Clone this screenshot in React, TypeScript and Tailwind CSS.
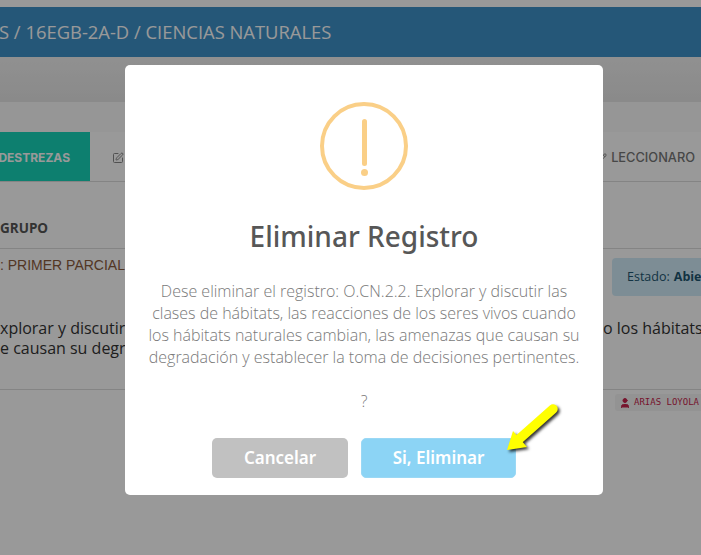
import { Pencil, SquarePen, User } from "lucide-react";

function Tabs() {
  return (
    <div className="flex h-[50px] border-b border-[#ddd] font-['Inter',sans-serif] text-[12px] font-semibold">
      <div className="flex w-[90px] shrink-0 items-center justify-end overflow-hidden whitespace-nowrap bg-[#16d4ba] pr-[20px] pt-[2px] font-bold text-white">
        DESTREZAS
      </div>
      <div className="flex flex-1 items-center pl-[22px] pt-[2px] text-[#888]">
        <SquarePen className="h-3 w-3" />
      </div>
      <div className="flex items-center gap-1 pr-[6px] pt-[2px] text-[12.8px] font-medium text-[#777]">
        <Pencil className="h-2.5 w-2.5" />
        <span>LECCIONARO</span>
      </div>
    </div>
  );
}

function PageBehind() {
  return (
    <div className="h-[555px] w-[701px] overflow-hidden bg-white font-['Open_Sans',sans-serif]">
      <div className="h-[7px]" />
      <div className="flex h-[50px] items-center whitespace-nowrap bg-[#3e91c9] text-[18.4px] font-medium text-white">
        <span className="-ml-[1px]">S / 16EGB-2A-D / CIENCIAS NATURALES</span>
      </div>
      <div className="h-[45px] bg-gradient-to-b from-[#f1f1f1] to-[#e6e6e6]" />
      <div className="h-[30px] bg-[#fafafa]" />
      <Tabs />
      <div className="flex h-[67px] items-end border-b border-[#ddd] pb-[10px] text-[13.5px] font-bold text-[#555]">
        GRUPO
      </div>
      <div className="flex h-[33px] items-center justify-between">
        <span className="font-['Liberation_Sans',sans-serif] text-[14px] text-[#8a5a3c]">
          : PRIMER PARCIAL
        </span>
        <div className="mt-[9px] flex h-[38px] w-[89px] shrink-0 items-center self-start whitespace-nowrap rounded-l-[4px] bg-[#d1ecf9] pl-[15px] text-[12.5px] text-[#1e5670]">
          Estado: <b className="ml-1">Abie</b>
        </div>
      </div>
      <div className="h-[108px] border-b border-[#ddd] pt-[36px] text-[16px] leading-[20px] text-[#333]">
        <p className="whitespace-nowrap">
          <span className="inline-block w-[603px]">xplorar y discutir las clases</span>o los hábitats
        </p>
        <p className="whitespace-nowrap">e causan su degradación</p>
      </div>
      <div className="flex justify-end pt-[4px]">
        <span className="flex h-[17px] w-[86px] items-center gap-[3px] overflow-hidden whitespace-nowrap rounded-l-[3px] bg-[#f5f5f5] pl-[4px] font-['DejaVu_Sans_Mono',monospace] text-[9px] text-[#c7254e]">
          <User className="h-3 w-3 shrink-0 fill-current" />
          ARIAS LOYOLA
        </span>
      </div>
    </div>
  );
}

function Arrow() {
  return (
    <svg
      className="absolute left-[495px] top-[395px] h-[70px] w-[80px] drop-shadow-[2px_2px_1.5px_rgba(0,0,0,0.8)]"
      viewBox="495 395 80 70"
      fill="none"
    >
      <path d="M553 409 L518 440" stroke="#ffff00" strokeWidth="9.5" strokeLinecap="round" />
      <path d="M507 450 L513 431 L527 447 Z" fill="#ffff00" />
    </svg>
  );
}

function WarningIcon() {
  return (
    <div className="flex h-[88px] w-[88px] flex-col items-center rounded-full border-[4px] border-[#facf87] pt-[13px]">
      <div className="h-[47px] w-[5px] rounded-full bg-[#facf87]" />
      <div className="mt-[3px] h-[7px] w-[7px] rounded-full bg-[#facf87]" />
    </div>
  );
}

export default function App() {
  return (
    <div className="relative h-[555px] w-[701px] overflow-hidden">
      <PageBehind />
      <div className="absolute inset-0 bg-black/40" />
      {/* modal */}
      <div className="absolute left-[125px] top-[65px] flex h-[430px] w-[478px] flex-col items-center rounded-[5px] bg-white pt-[37px] font-['Open_Sans',sans-serif]">
        <WarningIcon />
        <h2 className="mt-[28px] font-['Noto_Sans',sans-serif] text-[28px] font-medium leading-[37px] text-[#575757]">
          Eliminar Registro
        </h2>
        <p className="mt-[25px] w-[440px] text-center text-[16px] font-light leading-[22px] text-[#797979]">
          Dese eliminar el registro: O.CN.2.2. Explorar y discutir las clases de hábitats, las
          reacciones de los seres vivos cuando los hábitats naturales cambian, las amenazas que
          causan su degradación y establecer la toma de decisiones pertinentes.
        </p>
        <p className="mt-[22px] text-[16px] font-light leading-[22px] text-[#797979]">?</p>
        <div className="mt-[26px] flex gap-[13px] font-['Noto_Sans',sans-serif]">
          <button className="h-[40px] w-[136px] rounded-[5px] bg-[#c1c1c1] text-[17px] font-semibold text-white">
            Cancelar
          </button>
          <button className="h-[40px] w-[155px] rounded-[5px] border border-[#9ad8f5] bg-[#8cd4f5] text-[17px] font-semibold text-white">
            Si, Eliminar
          </button>
        </div>
      </div>
      <Arrow />
    </div>
  );
}
